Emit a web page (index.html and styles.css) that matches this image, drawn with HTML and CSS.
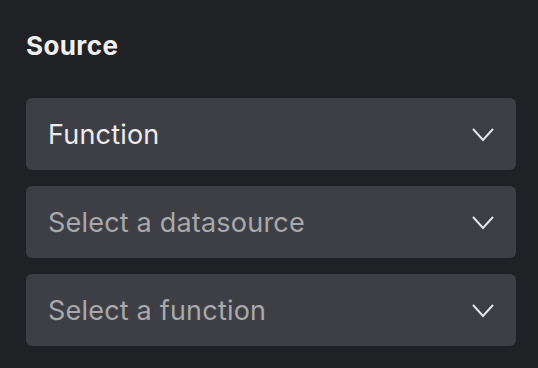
FILE: index.html
```html
<!DOCTYPE html>
<html>
  <head>
    <meta charset="utf-8">
    <title>Source</title>
    <link rel="stylesheet" href="styles.css">
  </head>
  <body>
    <div id="panel">
      <h2 class="title">Source</h2>
      <div class="field-list">
        <div class="select">
          <span class="select-value">Function</span>
          <svg class="chevron" width="22" height="14" viewBox="0 0 22 14"><path d="M1.5 1.5 L11 12 L20.5 1.5" fill="none" stroke="currentColor" stroke-width="2" stroke-linecap="round" stroke-linejoin="miter"/></svg>
        </div>
        <div class="select">
          <span class="select-value placeholder">Select a datasource</span>
          <svg class="chevron" width="22" height="14" viewBox="0 0 22 14"><path d="M1.5 1.5 L11 12 L20.5 1.5" fill="none" stroke="currentColor" stroke-width="2" stroke-linecap="round" stroke-linejoin="miter"/></svg>
        </div>
        <div class="select">
          <span class="select-value placeholder">Select a function</span>
          <svg class="chevron" width="22" height="14" viewBox="0 0 22 14"><path d="M1.5 1.5 L11 12 L20.5 1.5" fill="none" stroke="currentColor" stroke-width="2" stroke-linecap="round" stroke-linejoin="miter"/></svg>
        </div>
      </div>
    </div>
  </body>
</html>
```

FILE: styles.css
```css
body {
  margin: 0;
  padding: 0;
  background-color: #202125;
  font-family: 'Inter', 'Liberation Sans', sans-serif;
  color: #ececed;
}
#panel {
  padding: 30px 22px 0 26px;
}
.title {
  margin: 0;
  font-size: 26px;
  font-weight: 700;
  line-height: 32px;
  letter-spacing: 0.4px;
  color: #f0f0f1;
}
.field-list {
  margin-top: 36px;
  display: flex;
  flex-direction: column;
  gap: 16px;
}
.select {
  height: 72px;
  box-sizing: border-box;
  display: flex;
  align-items: center;
  justify-content: space-between;
  padding: 0 22px 0 22px;
  background-color: #3e3f44;
  border-radius: 6px;
}
.select-value {
  font-size: 27px;
  letter-spacing: 0.2px;
  color: #ececed;
}
.placeholder {
  color: #a8a9ad;
}
.chevron {
  color: #e4e4e6;
  margin-top: 1px;
}
```
